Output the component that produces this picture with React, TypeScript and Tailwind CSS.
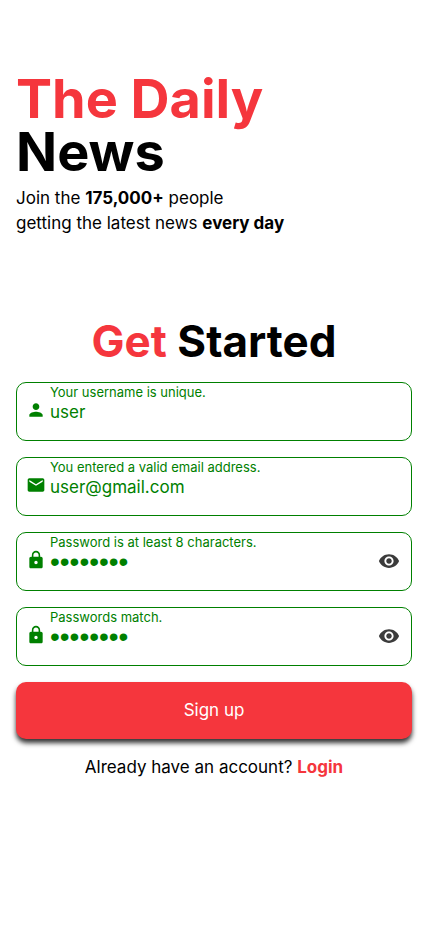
import { useState, type ReactNode } from "react";
import { MdEmail, MdLock, MdPerson, MdVisibility, MdVisibilityOff } from "react-icons/md";

type FieldProps = {
  id: string;
  type: string;
  label: string;
  hint: string;
  initial: string;
  icon: ReactNode;
};

function Field({ id, type, label, hint, initial, icon }: FieldProps) {
  const [value, setValue] = useState(initial);
  const [visible, setVisible] = useState(false);
  const isPassword = type === "password";
  const masked = isPassword && !visible;

  return (
    <div className="flex h-[59px] items-start rounded-[10px] border border-[#008000] px-[9px] text-[#008000]">
      <span className="mt-[17px] shrink-0">{icon}</span>
      <div className="ml-1 flex min-w-0 flex-1 flex-col">
        <label htmlFor={id} className="text-[13px] leading-[18px]">
          {hint}
        </label>
        <input
          id={id}
          type={isPassword && visible ? "text" : type}
          aria-label={label}
          value={value}
          onChange={(event) => setValue(event.target.value)}
          className={`h-[22px] w-full bg-transparent p-0 leading-[22px] outline-none ${
            masked ? "font-['Liberation_Sans',sans-serif] text-[28px]" : "text-[17px]"
          }`}
        />
      </div>
      {isPassword && (
        <button
          type="button"
          aria-label={visible ? "Hide password" : "Show password"}
          onClick={() => setVisible(!visible)}
          className="mt-[17px] mr-0.5 shrink-0 text-[#3b3b3b]"
        >
          {visible ? <MdVisibilityOff size={22} /> : <MdVisibility size={22} />}
        </button>
      )}
    </div>
  );
}

export default function App() {
  return (
    <main className="min-h-screen bg-white px-4 pt-[72px] pb-4 font-['Inter',sans-serif] text-[17px] text-black">
      <header>
        <h1 className="text-[54px] leading-[53px] font-bold">
          <span className="text-[#f5363d]">The Daily</span>
          <br />
          News
        </h1>
        <p className="mt-2 leading-[25px]">
          Join the <strong className="font-bold">175,000+</strong> people
          <br />
          getting the latest news <strong className="font-bold">every day</strong>
        </p>
      </header>

      <h2 className="mt-20 text-center text-[44px] leading-[50px] font-bold">
        <span className="text-[#f5363d]">Get</span> Started
      </h2>

      <form className="mt-4 flex flex-col gap-4" onSubmit={(event) => event.preventDefault()}>
        <Field
          id="username"
          type="text"
          label="Username"
          hint="Your username is unique."
          initial="user"
          icon={<MdPerson size={20} />}
        />
        <Field
          id="email"
          type="email"
          label="Email address"
          hint="You entered a valid email address."
          initial="user@gmail.com"
          icon={<MdEmail size={20} />}
        />
        <Field
          id="password"
          type="password"
          label="Password"
          hint="Password is at least 8 characters."
          initial="password"
          icon={<MdLock size={20} />}
        />
        <Field
          id="confirm"
          type="password"
          label="Confirm password"
          hint="Passwords match."
          initial="password"
          icon={<MdLock size={20} />}
        />
        <button
          type="submit"
          className="h-[57px] rounded-[10px] bg-[#f5363d] text-white shadow-[0_4px_5px_#000000cc]"
        >
          Sign up
        </button>
      </form>

      <p className="mt-4 text-center leading-6">
        Already have an account?{" "}
        <a href="#login" className="font-bold text-[#f5363d]">
          Login
        </a>
      </p>
    </main>
  );
}
